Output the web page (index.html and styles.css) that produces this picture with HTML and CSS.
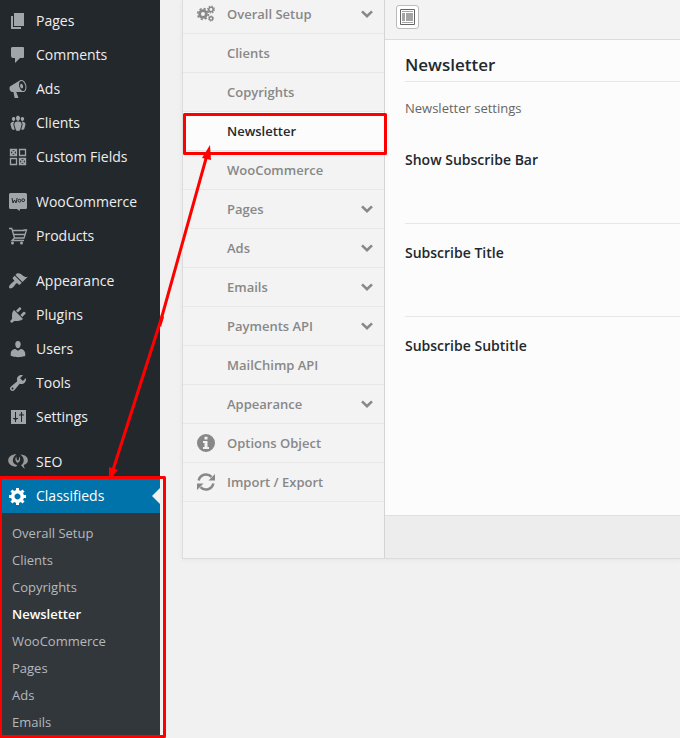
FILE: index.html
```html
<!DOCTYPE html>
<html lang="en">
<head>
<meta charset="utf-8">
<title>Classifieds</title>
<link rel="stylesheet" href="styles.css">
</head>
<body>
<svg class="defs" aria-hidden="true">
  <symbol id="chevron" viewBox="0 0 12 8"><path d="M1 1.4l5 4.8 5-4.8" fill="none" stroke="currentColor" stroke-width="2.6"/></symbol>
</svg>
<div class="layout">
  <nav class="admin-menu">
    <ul class="group">
      <li><a href="#"><svg class="icon" viewBox="0 0 20 20"><path d="M6 15V2h10v13H6zm-1 1h8v2H3V5h2v11z"/></svg>Pages</a></li>
      <li><a href="#"><svg class="icon" viewBox="0 0 20 20"><path d="M5 2h10q1 0 1 1v9q0 1-1 1h-3l-5 5v-5H5q-2 0-2-2V3q0-1 2-1z"/></svg>Comments</a></li>
      <li><a href="#"><svg class="icon" viewBox="0 0 20 20"><path d="M18.15 5.94c.46 1.62.38 3.22-.02 4.48-.42 1.28-1.26 2.18-2.3 2.48-.16.06-.26.06-.4.06-.06.02-.12.02-.18.02-.06.02-.14.02-.22.02h-6.8l2.22 5.5c.02.14-.06.26-.14.34-.08.1-.24.16-.34.16H6.95c-.1 0-.26-.06-.34-.16-.08-.08-.16-.2-.14-.34l-1-5.5H4.25l-.02-.02c-.5.06-1.08-.18-1.54-.62s-.88-1.08-1.06-1.88c-.24-.8-.2-1.56-.02-2.2.18-.62.58-1.08 1.06-1.3l.02-.02 9-5.4c.1-.06.18-.1.24-.16.06-.04.14-.08.24-.12.16-.08.28-.12.5-.18 1.04-.3 2.24.1 3.22.98s1.84 2.24 2.26 3.86zm-2.58 5.98h-.02c.4-.1.74-.34 1.04-.7.58-.7.86-1.76.86-3.04 0-.64-.1-1.3-.28-1.98-.34-1.36-1.02-2.5-1.78-3.24s-1.68-1.1-2.46-.88c-.82.22-1.4.96-1.7 2-.32 1.04-.28 2.36.06 3.72.38 1.36 1 2.5 1.8 3.24.78.74 1.62 1.1 2.48.88zm-2.54-7.08c.22-.04.42-.02.62.04.38.16.76.48 1.02 1s.42 1.2.42 1.78c0 .3-.04.56-.12.8-.18.48-.44.84-.86.94-.34.1-.8-.06-1.14-.4s-.64-.86-.78-1.5c-.18-.62-.12-1.24.02-1.72s.48-.84.82-.94z"/></svg>Ads</a></li>
      <li><a href="#"><svg class="icon" viewBox="0 0 20 20"><path d="M8.03 4.46c-.29 1.28.55 3.46 1.97 3.46 1.41 0 2.25-2.18 1.96-3.46-.22-.98-1.08-1.63-1.96-1.63-.89 0-1.74.65-1.97 1.63zm-4.13.9c-.25 1.08.47 2.93 1.67 2.93s1.92-1.85 1.67-2.93c-.19-.83-.92-1.39-1.67-1.39s-1.48.56-1.67 1.39zm8.86 0c-.25 1.08.47 2.93 1.66 2.93 1.2 0 1.92-1.85 1.67-2.93-.19-.83-.92-1.39-1.67-1.39-.74 0-1.47.56-1.66 1.39zm-.59 11.43l1.25-4.3C14.2 10 12.71 8.47 10 8.47c-2.72 0-4.21 1.53-3.44 4.02l1.26 4.3C8.05 17.51 9 18 10 18c.98 0 1.94-.49 2.17-1.21zm-6.1-7.63c-.49.67-.96 1.83-.42 3.59l1.12 3.79c-.34.2-.77.31-1.2.31-.85 0-1.65-.41-1.85-1.03l-1.07-3.65c-.65-2.11.61-3.4 2.92-3.4.27 0 .54.02.79.06-.1.1-.2.22-.29.33zm8.35-.39c2.31 0 3.58 1.29 2.92 3.4l-1.07 3.65c-.2.62-1 1.03-1.85 1.03-.43 0-.86-.11-1.2-.31l1.11-3.77c.55-1.78.08-2.94-.42-3.61-.08-.11-.18-.23-.28-.33.25-.04.51-.06.79-.06z"/></svg>Clients</a></li>
      <li><a href="#"><svg class="icon line" viewBox="0 0 20 20"><path d="M2.5 2.500h6v6h-6zM11.500 2.500h6v6h-6zM2.500 11.500h6v6h-6zM11.500 11.500h6v6h-6z" stroke-width="1.300"/><path d="M2.500 2.500l6 6m0-6l-6 6M11.500 11.500l6 6m0-6l-6 6" stroke-width="1.600"/></svg>Custom Fields</a></li>
    </ul>
    <ul class="group">
      <li><a href="#"><svg class="icon" viewBox="0 0 20 20"><path d="M2.500 1h15q1.500 0 1.500 1.500v13q0 1.500-1.500 1.500H12l-.5 2L9 17H2.500Q1 17 1 15.500v-13Q1 1 2.500 1z"/><path class="cut" d="M4 6l1 5 1.500-3L8 11l1.200-5"/><circle class="cut" cx="11.500" cy="8.700" r="1.400"/><circle class="cut" cx="15.200" cy="8.200" r="1.400"/></svg>WooCommerce</a></li>
      <li><a href="#"><svg class="icon line" viewBox="0 0 20 20"><path d="M1 2.500h2.800L6.500 12H16l2.500-8h-3M4.500 4.500h12M6 8.500h11M6.500 12L4 14.500h12" stroke-width="1.300"/><circle class="solid" cx="4.500" cy="17" r="1.500"/><circle class="solid" cx="13.500" cy="17" r="1.500"/></svg>Products</a></li>
    </ul>
    <ul class="group">
      <li><a href="#"><svg class="icon" viewBox="0 0 20 20"><path d="M14.480 11.060L7.410 3.990l1.500-1.500c.5-.56 2.300-.47 3.510.32 1.210.8 1.430 1.280 2.910 2.100 1.180.64 2.450 1.260 4.450.85zm-.71.71L6.700 4.700 4.930 6.470c-.39.39-.39 1.020 0 1.410l1.060 1.060c.39.39.39 1.030 0 1.420-.6.6-1.430 1.110-2.210 1.690-.35.26-.7.53-1.010.84C1.430 14.230.4 16.080 1.400 17.070c.99 1 2.840-.03 4.180-1.360.31-.31.58-.66.85-1.020.57-.78 1.080-1.610 1.690-2.210.39-.39 1.020-.39 1.410 0l1.060 1.060c.39.39 1.020.39 1.410 0z"/></svg>Appearance</a></li>
      <li><a href="#"><svg class="icon" viewBox="0 0 20 20"><path d="M13.110 4.360L9.870 7.600 8 5.730l3.240-3.240c.35-.34 1.050-.2 1.560.32.52.51.66 1.210.31 1.550zm-8 1.770l.91-1.120 9.010 9.010-1.190.84c-.71.71-2.630 1.160-3.820 1.160H6.140L4.900 17.260c-.59.59-1.540.59-2.120 0-.59-.58-.59-1.530 0-2.120l1.240-1.240v-3.880c0-1.130.4-3.190 1.090-3.890zm7.260 3.970l3.240-3.240c.34-.35 1.040-.21 1.550.31.52.51.66 1.210.31 1.550l-3.240 3.250z"/></svg>Plugins</a></li>
      <li><a href="#"><svg class="icon" viewBox="0 0 20 20"><path d="M10 9.250c-2.270 0-2.730-3.440-2.730-3.440C7 4.020 7.820 2 9.970 2c2.160 0 2.980 2.020 2.710 3.810 0 0-.41 3.440-2.680 3.440zm0 2.570L12.720 10c2.390 0 4.520 2.330 4.520 4.530v2.490s-3.650 1.130-7.240 1.130c-3.650 0-7.240-1.130-7.240-1.130v-2.490c0-2.250 1.940-4.480 4.470-4.480z"/></svg>Users</a></li>
      <li><a href="#"><svg class="icon" viewBox="0 0 20 20"><path d="M16.680 9.770c-1.340 1.340-3.300 1.670-4.950.99l-5.410 6.520c-.99.99-2.590.99-3.580 0s-.99-2.590 0-3.570l6.520-5.420c-.68-1.650-.35-3.610.99-4.950 1.280-1.280 3.120-1.620 4.720-1.060l-2.890 2.890 2.820 2.820 2.860-2.870c.53 1.580.18 3.390-1.080 4.650zM3.810 16.210c.4.39 1.040.39 1.430 0 .4-.4.4-1.040 0-1.430-.39-.4-1.030-.4-1.430 0-.39.39-.39 1.030 0 1.430z"/></svg>Tools</a></li>
      <li><a href="#"><svg class="icon" viewBox="0 0 20 20"><path d="M3 3h15v14H3z"/><path class="cut" d="M7.500 5v10M5 11.500h5M13.500 5v10M11 8h5"/><path class="cut" d="M6.500 12.500h2M12.500 7h2"/></svg>Settings</a></li>
    </ul>
    <ul class="group">
      <li><a href="#"><svg class="icon seo" viewBox="0 0 20 20"><path d="M8.500 2.300C3.500 2.300.2 5 .2 8.500c0 3.200 3 5.800 7.600 6.300l1.700-1.300C6.500 12.500 4.800 10.800 4.800 8.500c0-2.500 1.500-4.700 3.700-6.200zM8.200 4.500c-1 1.800-1.200 3.500-.2 4.800.8 1 1.500 1.300 1.700 2.200.2-.9 1-1.200 1.800-2.200 1-1.300.8-3-.2-4.800l-.6 3.700H9zM12.300 2.500c4.500.2 7.600 2.500 7.600 5.700 0 2.400-1.700 3.900-4.200 4.800l1 4-3.700-3.700c1.800-1.200 2.700-2.700 2.700-5 0-2.500-1.200-4.300-3.400-5.800z"/></svg>SEO</a></li>
      <li class="current"><a href="#"><svg class="icon" viewBox="0 0 20 20"><path d="M18 12h-2.180c-.17.7-.44 1.350-.81 1.930l1.540 1.540-2.100 2.100-1.540-1.540c-.58.36-1.230.63-1.910.79V19H8v-2.180c-.68-.16-1.330-.43-1.910-.79l-1.540 1.540-2.120-2.120 1.540-1.540c-.36-.58-.63-1.230-.79-1.910H1V9.030h2.170c.16-.7.44-1.350.8-1.940L2.430 5.550l2.100-2.100 1.540 1.540c.58-.37 1.240-.64 1.930-.81V2h3v2.180c.68.16 1.330.43 1.910.79l1.540-1.540 2.120 2.120-1.540 1.540c.36.59.64 1.240.8 1.940H18V12zm-8.500 1.500c1.660 0 3-1.340 3-3s-1.340-3-3-3-3 1.340-3 3 1.340 3 3 3z"/></svg>Classifieds</a>
        <ul class="submenu">
          <li><a href="#">Overall Setup</a></li>
          <li><a href="#">Clients</a></li>
          <li><a href="#">Copyrights</a></li>
          <li><a href="#" class="active">Newsletter</a></li>
          <li><a href="#">WooCommerce</a></li>
          <li><a href="#">Pages</a></li>
          <li><a href="#">Ads</a></li>
          <li><a href="#">Emails</a></li>
        </ul>
      </li>
    </ul>
  </nav>
  <main class="content">
    <div class="panel">
      <ul class="tabs">
        <li><a href="#"><svg class="tab-icon" viewBox="0 0 18 18"><g fill="none" stroke="currentColor"><circle cx="6" cy="9" r="3.400" stroke-width="2.800"/><circle cx="6" cy="9" r="5.400" stroke-width="1.600" stroke-dasharray="2.200 2.040"/><circle cx="14" cy="4.500" r="2.200" stroke-width="1.600"/><circle cx="14" cy="4.500" r="3.400" stroke-width="1.200" stroke-dasharray="1.350 1.320"/><circle cx="14" cy="13.500" r="1.700" stroke-width="1.400"/><circle cx="14" cy="13.500" r="2.600" stroke-width="1" stroke-dasharray="1.020 1.020"/></g></svg>Overall Setup<svg class="chevron"><use href="#chevron"/></svg></a></li>
        <li><a href="#">Clients</a></li>
        <li><a href="#">Copyrights</a></li>
        <li><a href="#" class="selected">Newsletter</a></li>
        <li><a href="#">WooCommerce</a></li>
        <li><a href="#">Pages<svg class="chevron"><use href="#chevron"/></svg></a></li>
        <li><a href="#">Ads<svg class="chevron"><use href="#chevron"/></svg></a></li>
        <li><a href="#">Emails<svg class="chevron"><use href="#chevron"/></svg></a></li>
        <li><a href="#">Payments API<svg class="chevron"><use href="#chevron"/></svg></a></li>
        <li><a href="#">MailChimp API</a></li>
        <li><a href="#">Appearance<svg class="chevron"><use href="#chevron"/></svg></a></li>
        <li><a href="#"><svg class="tab-icon" viewBox="0 0 18 18"><path fill-rule="evenodd" d="M9 0a9 9 0 1 0 0 18A9 9 0 0 0 9 0zM7.500 2.800h3v2.700h-3zM6 7h4.500v6H12v2H6v-2h1.500V9H6z"/></svg>Options Object</a></li>
        <li><a href="#"><svg class="tab-icon" viewBox="0 0 18 18"><path d="M1.700 7.500A7.500 7.500 0 0 1 14.500 3.800M16.300 10.500A7.500 7.500 0 0 1 3.500 14.200" fill="none" stroke="currentColor" stroke-width="2.500"/><path d="M18 1v6.500h-6.500zM0 17v-6.500h6.500z"/></svg>Import / Export</a></li>
      </ul>
      <section class="settings">
        <header class="toolbar">
          <button type="button" class="expand" aria-label="Expand options"><svg viewBox="0 0 15 16"><path d="M.5.500h14v15H.5z" fill="#fff" stroke="#666"/><path d="M2 2h11v1H2zM2 13h11v1H2zM2 4h3v8H2zM6 4h7v8H6z" fill="#a5a5a5"/></svg></button>
        </header>
        <div class="body">
          <h2>Newsletter</h2>
          <p>Newsletter settings</p>
          <div class="field"><h3>Show Subscribe Bar</h3></div>
          <div class="field"><h3>Subscribe Title</h3></div>
          <div class="field"><h3>Subscribe Subtitle</h3></div>
        </div>
        <footer class="bottom"></footer>
      </section>
    </div>
  </main>
</div>
<svg class="annotations" width="680" height="738" aria-hidden="true">
  <g fill="none" stroke="#f00" stroke-width="3" stroke-linejoin="round">
    <path d="M184.500 114.500h201v39h-201zM.5 477.500h164v259H.5zM207 155L161.500 318 113 470"/>
  </g>
  <path d="M210 145l1 15-9-2zM109 481l0-14 9 3zM161 314l3 3-3 10-2-2z" fill="#f00"/>
</svg>
</body>
</html>
```
FILE: styles.css
```css
* {
  box-sizing: border-box;
}

body {
  margin: 0;
  background: #f1f1f1;
  color: #23282d;
  font: 13px/18px "Open Sans", "Noto Sans", sans-serif;
}

ul,
h2,
h3,
p {
  margin: 0;
  padding: 0;
  list-style: none;
}

a {
  color: inherit;
  text-decoration: none;
}

.defs {
  display: none;
}

.layout {
  display: flex;
  height: 100vh;
  overflow: hidden;
}

.admin-menu {
  flex: none;
  width: 160px;
  padding-top: 4px;
  background: #23282d;
  color: #eee;
  font-size: 14px;
}

.group {
  margin-bottom: 11px;
}

.group > li > a {
  display: flex;
  align-items: center;
  gap: 8px;
  height: 34px;
  padding-left: 8px;
}

.icon {
  flex: none;
  width: 20px;
  height: 20px;
  fill: #a0a5aa;
}

.icon.line {
  fill: none;
  stroke: #a0a5aa;
}

.icon.seo {
  fill: #999;
}

.icon .solid {
  fill: #a0a5aa;
  stroke: none;
}

.icon .cut {
  fill: none;
  stroke: #23282d;
}

.current > a {
  position: relative;
  background: #0073aa;
  color: #fff;
}

.current > a::after {
  content: "";
  position: absolute;
  top: 9px;
  right: 0;
  border: 8px solid transparent;
  border-left: 0;
  border-right-color: #f1f1f1;
}

.current .icon {
  fill: #fff;
}

.submenu {
  padding: 7px 0 8px;
  background: #32373c;
  color: #b4b9be;
  font-size: 13px;
}

.submenu a {
  display: block;
  padding: 4px 12px 5px;
}

.submenu .active {
  color: #fff;
  font-weight: 600;
}

.content {
  flex: 1;
  min-width: 0;
  padding-left: 22px;
}

.panel {
  display: flex;
  border: 1px solid #dcdcdc;
  border-width: 0 0 1px 1px;
  box-shadow: 0 1px 4px #e5e5e5;
}

.tabs {
  flex: none;
  width: 202px;
  margin-top: -5px;
  padding-bottom: 56px;
  border-right: 1px solid #d4d4d4;
  background: #f3f3f3;
}

.tabs a {
  display: flex;
  align-items: center;
  position: relative;
  height: 39px;
  padding: 0 11px 0 44px;
  border-bottom: 1px solid #e7e7e7;
  color: #888;
  font-weight: 600;
}

.tabs .selected {
  background: #fcfcfc;
  color: #23282d;
}

.tab-icon {
  position: absolute;
  left: 14px;
  width: 18px;
  height: 18px;
  fill: currentColor;
}

.chevron {
  width: 12px;
  height: 8px;
  margin-left: auto;
}

.settings {
  display: flex;
  flex: 1;
  flex-direction: column;
  min-width: 0;
  background: #fcfcfc;
}

.toolbar {
  height: 40px;
  padding: 5px 11px;
  border-bottom: 1px solid #dcdcdc;
  background: #f3f3f3;
}

.expand {
  display: grid;
  place-items: center;
  width: 23px;
  height: 24px;
  padding: 0;
  border: 1px solid #bbb;
  border-radius: 3px;
  background: #fff;
}

.expand svg {
  width: 15px;
  height: 16px;
}

.body {
  flex: 1;
  padding: 12px 0 0 20px;
}

.body h2 {
  padding: 1px 0 5px;
  border-bottom: 1px solid #e7e7e7;
  font-size: 17px;
  font-weight: 600;
  line-height: 23px;
}

.body p {
  padding: 17px 0 14px;
  color: #666;
}

.field {
  height: 93px;
  padding-top: 19px;
  border-bottom: 1px solid #e7e7e7;
}

.field:last-child {
  border-bottom: 0;
}

.field h3 {
  font-size: 14px;
  font-weight: 600;
  line-height: 20px;
}

.bottom {
  height: 43px;
  border-top: 1px solid #dfdfdf;
  background: #ededed;
}

.annotations {
  position: absolute;
  top: 0;
  left: 0;
  pointer-events: none;
}
```
